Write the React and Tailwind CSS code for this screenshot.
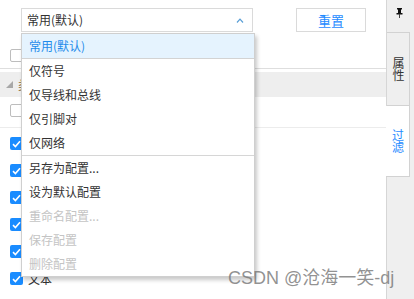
const rows = ["元件", "导线", "总线", "网络标签", "引脚", "文本", "图形"];

const menuItems = [
  { label: "仅符号" },
  { label: "仅导线和总线" },
  { label: "仅引脚对" },
  { label: "仅网络" },
];

const configItems = [
  { label: "另存为配置..." },
  { label: "设为默认配置" },
  { label: "重命名配置...", disabled: true },
  { label: "保存配置", disabled: true },
  { label: "删除配置", disabled: true },
];

function CheckBox({ checked }) {
  if (!checked) {
    return <span className="block w-[13px] h-[13px] rounded-[2px] border border-[#bdbdbd] bg-white" />;
  }
  return (
    <span className="flex shrink-0 items-center justify-center w-[13px] h-[13px] rounded-[2px] bg-[#1a8cff]">
      <svg width="9" height="8" viewBox="0 0 9 8">
        <path d="M1 4.2 L3.4 6.5 L8 1.2" fill="none" stroke="white" strokeWidth="1.6" />
      </svg>
    </span>
  );
}

function PinIcon() {
  return (
    <svg width="7" height="10" viewBox="0 0 7 10">
      <rect x="1" y="0" width="5" height="1.5" fill="#111" />
      <rect x="2" y="1" width="3" height="4" fill="#111" />
      <rect x="0.5" y="5" width="6" height="1.5" fill="#111" />
      <rect x="3" y="6" width="1" height="4" fill="#444" />
    </svg>
  );
}

function Menu() {
  return (
    <div className="absolute left-[21px] top-[33px] w-[234px] bg-white border border-[#cfcfcf] shadow-[2px_3px_4px_rgba(0,0,0,0.22)]">
      <div className="h-[25px] flex items-center pl-[7px] bg-[#e5f3fe] border-b border-[#d3d3d3] text-[#1f8beb]">
        常用(默认)
      </div>
      {menuItems.map((item) => (
        <div key={item.label} className="h-[24px] flex items-center pl-[7px] text-[#333]">
          {item.label}
        </div>
      ))}
      <div className="border-t border-[#d6d6d6]" />
      {configItems.map((item) => (
        <div
          key={item.label}
          className={
            item.disabled
              ? "h-[24px] flex items-center pl-[7px] text-[#c4c4c4]"
              : "h-[24px] flex items-center pl-[7px] text-[#333]"
          }
        >
          {item.label}
        </div>
      ))}
    </div>
  );
}

export default function App() {
  return (
    <div className="relative w-[414px] h-[299px] overflow-hidden flex bg-white text-[12px] leading-none font-['Noto_Sans_CJK_SC','Noto_Sans',sans-serif]">
      <div className="w-[386px] flex flex-col overflow-hidden">
        <div className="shrink-0 flex pt-[8px]">
          <div className="ml-[21px] w-[232px] h-[24px] border border-[#dadada] flex items-center justify-between pl-[5px] pr-[8px] text-[#333]">
            <span>常用(默认)</span>
            <svg width="8" height="5" viewBox="0 0 8 5">
              <path d="M1 4.5 L4 1.2 L7 4.5" fill="none" stroke="#5a9fd6" strokeWidth="1.2" />
            </svg>
          </div>
          <button className="ml-[43px] w-[70px] h-[24px] border border-[#dadada] bg-white text-[13px] text-[#1f8bff] flex items-center justify-center">
            重置
          </button>
        </div>

        <div className="shrink-0 h-[37px] border-b border-[#dedede] pl-[10px] pt-[17px]">
          <CheckBox checked={false} />
        </div>

        <div className="shrink-0 mt-[3px] h-[25px] bg-[#eeeeee] flex items-center pl-[6px] gap-[5px]">
          <svg width="7" height="7" viewBox="0 0 7 7">
            <path d="M7 0 L7 7 L0 7 Z" fill="#a8a8a8" />
          </svg>
          <span className="text-[#8a6d3b]">类别</span>
        </div>

        <div className="shrink-0 h-[31px] border-b border-[#ececec] pl-[10px] pt-[7px]">
          <CheckBox checked={false} />
        </div>

        <div className="shrink-0 pt-[2px] flex flex-col">
          {rows.map((r) => (
            <div key={r} className="shrink-0 h-[27px] flex items-center pl-[10px] gap-[5px] text-[#333]">
              <CheckBox checked />
              <span>{r}</span>
            </div>
          ))}
        </div>
      </div>

      <div className="w-[28px] bg-[#efefef] border-l border-[#d6d6d6] flex flex-col">
        <div className="shrink-0 h-[32px] flex items-start justify-center pt-[8px] pr-[2px]">
          <PinIcon />
        </div>
        <div className="shrink-0 w-[23px] h-[74px] border-t border-b border-r border-[#d2d2d2] flex items-center justify-center text-[#333]">
          <span className="[writing-mode:vertical-lr]">属性</span>
        </div>
        <div className="shrink-0 -ml-px w-[24px] h-[71px] bg-white border-b border-r border-[#d2d2d2] flex items-center justify-center text-[#1f8bff]">
          <span className="[writing-mode:vertical-lr]">过滤</span>
        </div>
      </div>

      <Menu />

      <div className="absolute left-[228px] top-[269px] text-[18px] leading-none whitespace-nowrap text-[rgba(110,110,110,0.75)] font-['Liberation_Sans','Noto_Sans_CJK_SC',sans-serif]">
        CSDN @沧海一笑-dj
      </div>
    </div>
  );
}
